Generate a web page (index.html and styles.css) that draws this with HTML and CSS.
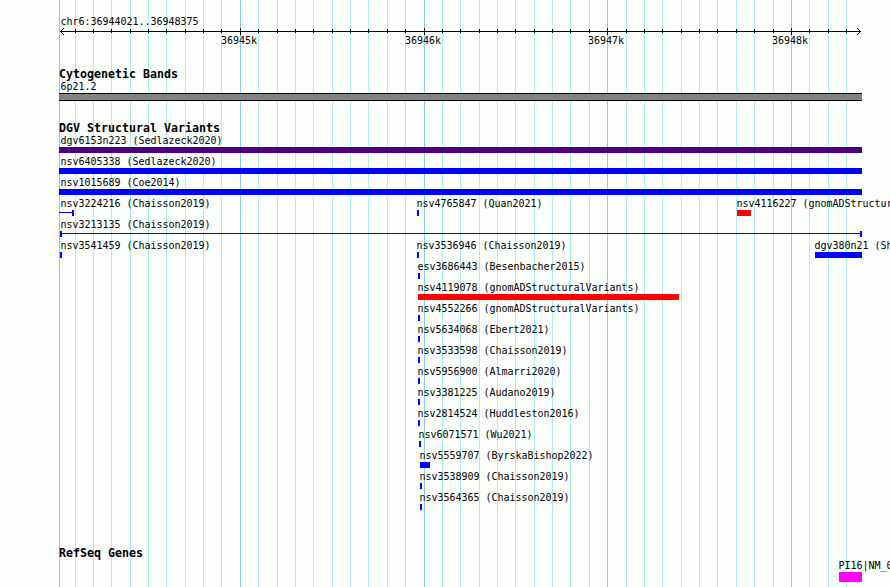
FILE: index.html
```html
<!DOCTYPE html>
<html lang="en">
<head>
<meta charset="utf-8">
<title>chr6:36944021..36948375</title>
<link rel="stylesheet" href="styles.css">
</head>
<body>
<main class="browser">
  <svg class="gridlines" width="890" height="587" shape-rendering="crispEdges" aria-hidden="true">
    <path class="minor" d="M75.5 0v587M93.5 0v587M111.5 0v587M130.5 0v587M148.5 0v587M166.5 0v587M185.5 0v587M203.5 0v587M221.5 0v587M258.5 0v587M277.5 0v587M295.5 0v587M313.5 0v587M332.5 0v587M350.5 0v587M368.5 0v587M387.5 0v587M405.5 0v587M442.5 0v587M460.5 0v587M479.5 0v587M497.5 0v587M515.5 0v587M534.5 0v587M552.5 0v587M570.5 0v587M589.5 0v587M626.5 0v587M644.5 0v587M662.5 0v587M681.5 0v587M699.5 0v587M717.5 0v587M736.5 0v587M754.5 0v587M773.5 0v587M809.5 0v587M828.5 0v587M846.5 0v587"/>
    <path class="major" d="M59.5 0v587M240.5 0v587M424.5 0v587M607.5 0v587M791.5 0v587"/>
  </svg>

  <header class="ruler">
    <div class="region">chr6:36944021..36948375</div>
    <svg class="axis" width="890" height="7" shape-rendering="crispEdges" aria-hidden="true">
      <path d="M60 3.5H861"/>
      <path d="M75.5 1v4M93.5 1v4M111.5 1v4M130.5 1v4M148.5 1v4M166.5 1v4M185.5 1v4M203.5 1v4M221.5 1v4M258.5 1v4M277.5 1v4M295.5 1v4M313.5 1v4M332.5 1v4M350.5 1v4M368.5 1v4M387.5 1v4M405.5 1v4M442.5 1v4M460.5 1v4M479.5 1v4M497.5 1v4M515.5 1v4M534.5 1v4M552.5 1v4M570.5 1v4M589.5 1v4M626.5 1v4M644.5 1v4M662.5 1v4M681.5 1v4M699.5 1v4M717.5 1v4M736.5 1v4M754.5 1v4M773.5 1v4M809.5 1v4M828.5 1v4M846.5 1v4"/>
      <path d="M240.5 0v7M424.5 0v7M607.5 0v7M791.5 0v7"/>
      <path d="M61 2.5h1M62 1.5h1M63 0.5h1M61 4.5h1M62 5.5h1M63 6.5h1M859 2.5h1M858 1.5h1M857 0.5h1M859 4.5h1M858 5.5h1M857 6.5h1"/>
    </svg>
    <div class="row ticks">
      <span class="feature" style="--l:221px">36945k</span>
      <span class="feature" style="--l:405px">36946k</span>
      <span class="feature" style="--l:588px">36947k</span>
      <span class="feature" style="--l:772px">36948k</span>
    </div>
  </header>

  <section class="track cytobands">
    <h2>Cytogenetic Bands</h2>
    <div class="label" style="--l:60px">6p21.2</div>
    <div class="band"></div>
  </section>

  <section class="track variants">
    <h2>DGV Structural Variants</h2>
    <div class="row"><div class="feature"><div class="label" style="--l:60px">dgv6153n223 (Sedlazeck2020)</div><div class="bar complex" style="--x:59px;--w:803px"></div></div></div>
    <div class="row"><div class="feature"><div class="label" style="--l:60px">nsv6405338 (Sedlazeck2020)</div><div class="bar" style="--x:59px;--w:803px"></div></div></div>
    <div class="row"><div class="feature"><div class="label" style="--l:60px">nsv1015689 (Coe2014)</div><div class="bar" style="--x:59px;--w:803px"></div></div></div>
    <div class="row">
      <div class="feature"><div class="label" style="--l:60px">nsv3224216 (Chaisson2019)</div><div class="bar span cut" style="--x:59px;--w:15px"></div></div>
      <div class="feature"><div class="label" style="--l:416px">nsv4765847 (Quan2021)</div><div class="bar" style="--x:417px;--w:2px"></div></div>
      <div class="feature"><div class="label" style="--l:736px">nsv4116227 (gnomADStructuralVariants)</div><div class="bar loss" style="--x:737px;--w:14px"></div></div>
    </div>
    <div class="row"><div class="feature"><div class="label" style="--l:60px">nsv3213135 (Chaisson2019)</div><div class="bar span" style="--x:60px;--w:802px"></div></div></div>
    <div class="row">
      <div class="feature"><div class="label" style="--l:60px">nsv3541459 (Chaisson2019)</div><div class="bar" style="--x:60px;--w:2px"></div></div>
      <div class="feature"><div class="label" style="--l:416px">nsv3536946 (Chaisson2019)</div><div class="bar" style="--x:417px;--w:2px"></div></div>
      <div class="feature"><div class="label" style="--l:814px">dgv380n21 (Shaikh2009)</div><div class="bar" style="--x:815px;--w:47px"></div></div>
    </div>
    <div class="row"><div class="feature"><div class="label" style="--l:417px">esv3686443 (Besenbacher2015)</div><div class="bar" style="--x:418px;--w:2px"></div></div></div>
    <div class="row"><div class="feature"><div class="label" style="--l:417px">nsv4119078 (gnomADStructuralVariants)</div><div class="bar loss" style="--x:418px;--w:261px"></div></div></div>
    <div class="row"><div class="feature"><div class="label" style="--l:417px">nsv4552266 (gnomADStructuralVariants)</div><div class="bar" style="--x:418px;--w:2px"></div></div></div>
    <div class="row"><div class="feature"><div class="label" style="--l:417px">nsv5634068 (Ebert2021)</div><div class="bar" style="--x:418px;--w:2px"></div></div></div>
    <div class="row"><div class="feature"><div class="label" style="--l:417px">nsv3533598 (Chaisson2019)</div><div class="bar" style="--x:418px;--w:2px"></div></div></div>
    <div class="row"><div class="feature"><div class="label" style="--l:417px">nsv5956900 (Almarri2020)</div><div class="bar" style="--x:418px;--w:2px"></div></div></div>
    <div class="row"><div class="feature"><div class="label" style="--l:417px">nsv3381225 (Audano2019)</div><div class="bar" style="--x:418px;--w:2px"></div></div></div>
    <div class="row"><div class="feature"><div class="label" style="--l:417px">nsv2814524 (Huddleston2016)</div><div class="bar" style="--x:418px;--w:2px"></div></div></div>
    <div class="row"><div class="feature"><div class="label" style="--l:418px">nsv6071571 (Wu2021)</div><div class="bar" style="--x:419px;--w:2px"></div></div></div>
    <div class="row"><div class="feature"><div class="label" style="--l:419px">nsv5559707 (ByrskaBishop2022)</div><div class="bar" style="--x:420px;--w:10px"></div></div></div>
    <div class="row"><div class="feature"><div class="label" style="--l:419px">nsv3538909 (Chaisson2019)</div><div class="bar" style="--x:420px;--w:2px"></div></div></div>
    <div class="row"><div class="feature"><div class="label" style="--l:419px">nsv3564365 (Chaisson2019)</div><div class="bar" style="--x:420px;--w:2px"></div></div></div>
  </section>

  <section class="track genes">
    <h2>RefSeq Genes</h2>
    <div class="label" style="--l:838px">PI16|NM_001199159</div>
    <div class="bar gene" style="--x:839px;--w:23px"></div>
  </section>
</main>
</body>
</html>
```
FILE: styles.css
```css
body {
  margin: 0;
  background: #fcfefc;
  color: #000;
  font: 10px/17px "DejaVu Sans Mono", "Liberation Mono", monospace;
  letter-spacing: -0.02px;
}

.browser {
  position: relative;
  width: 890px;
  height: 587px;
  overflow: hidden;
  white-space: nowrap;
}

.gridlines {
  position: absolute;
  inset: 0;
  z-index: -1;
}

.minor { stroke: #aceeec; }
.major { stroke: #84ceec; }

.ruler {
  height: 66px;
  padding-top: 13px;
  box-sizing: border-box;
}

.region {
  height: 15px;
  padding-left: 60.4px;
}

.axis {
  display: block;
  stroke: #000;
}

.ticks {
  margin-top: -2px;
  line-height: 15px;
}

.row { display: grid; }

.feature {
  grid-area: 1 / 1;
  padding-left: var(--l, 0);
}

.track h2 {
  height: 12px;
  margin: 0;
  padding-left: 59px;
  font-size: 11.63px;
  line-height: 17px;
  letter-spacing: 0;
}

.label {
  height: 15px;
  padding-left: calc(var(--l) + 0.4px);
}

.cytobands {
  height: 54px;
}

.band {
  width: 803px;
  height: 6px;
  margin-left: 59px;
  border: solid #000;
  border-width: 1px 0;
  background: #848284;
}

.variants { height: 425px; }

.bar {
  width: var(--w);
  height: 6px;
  margin-left: var(--x);
  background: #00f;
}

.complex { background: #4b0082; }
.loss { background: #f00; }

.span {
  box-sizing: border-box;
  border: solid #00f;
  border-width: 0 2px;
  background: linear-gradient(#0000d4, #0000d4) 0 2px / 100% 1px no-repeat;
}

.cut { border-left-width: 0; }

.gene {
  height: 10px;
  background: #f0f;
}
```
